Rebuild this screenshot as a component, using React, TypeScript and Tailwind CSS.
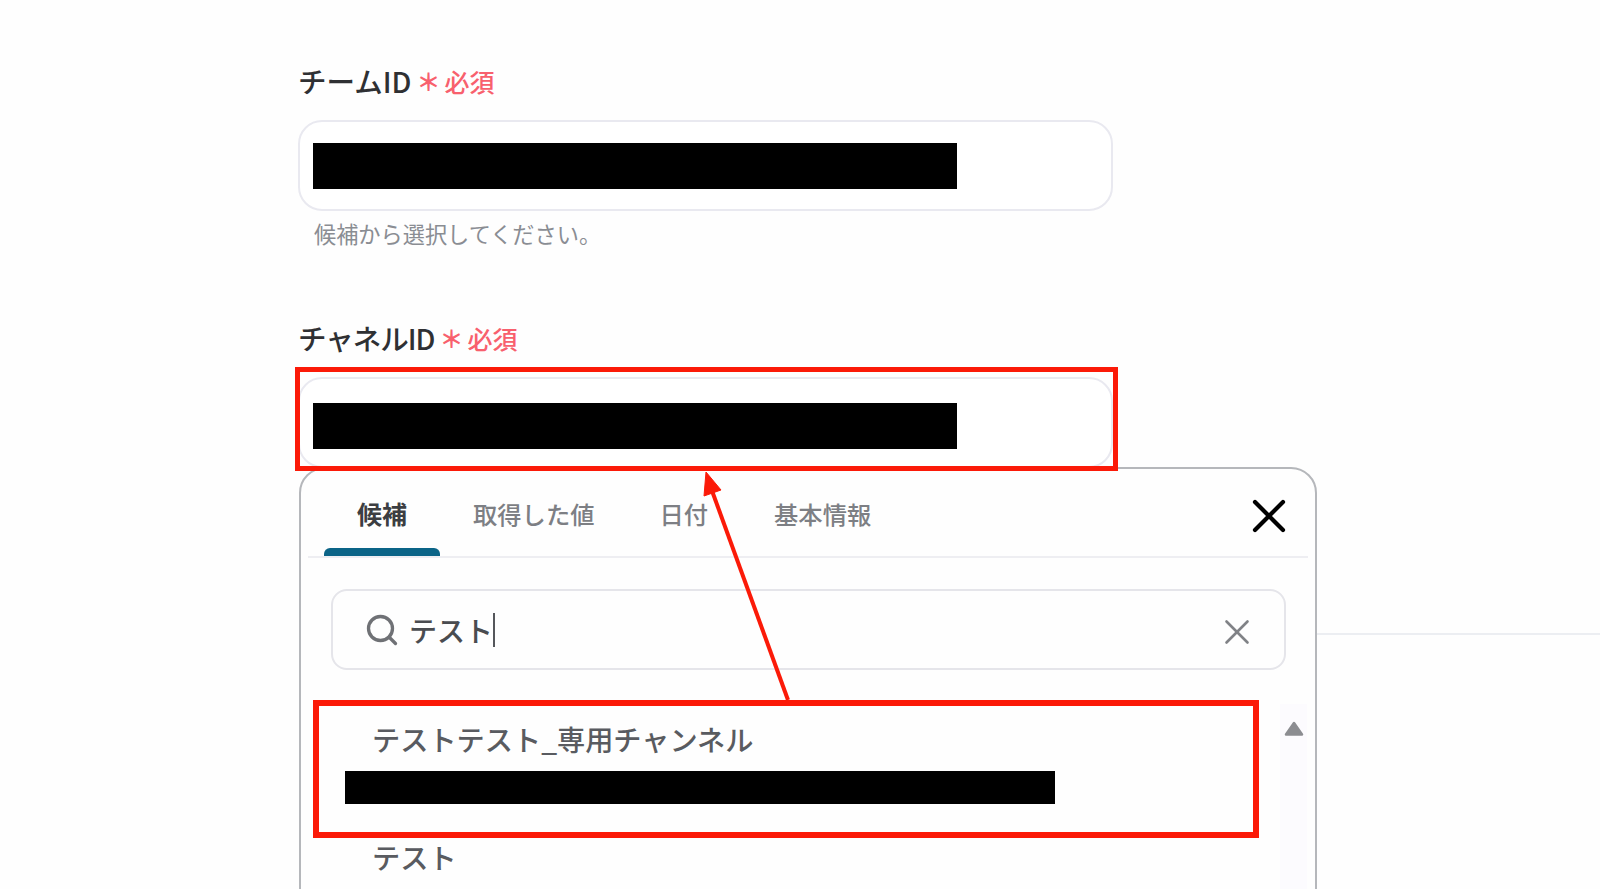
import { Search, X } from "lucide-react";

const font = { fontFamily: '"Noto Sans CJK JP", "Noto Sans", sans-serif' };

function FieldLabel({ text, tight }: { text: string; tight?: boolean }) {
  return (
    <div className="flex h-[34px] items-center font-medium text-[28.5px] leading-[34px] text-[#2f3033]">
      <span className={tight ? "tracking-[-1px]" : ""}>{text}</span>
      <span className="ml-[5px] w-[23px] text-[24px] font-bold leading-[34px] text-[#f8606d]">＊</span>
      <span className="ml-[5px] text-[25px] text-[#f8606d]">必須</span>
    </div>
  );
}

function RedactedInput({ low }: { low?: boolean }) {
  return (
    <div className={low ? "flex h-[91px] w-[815px] items-center rounded-[24px] border-2 border-[#e9e9f0] bg-white pl-[13px] pt-[7px]" : "flex h-[91px] w-[815px] items-center rounded-[24px] border-2 border-[#e9e9f0] bg-white pl-[13px] pt-[1px]"}>
      <div className="h-[46px] w-[644px] bg-black" />
    </div>
  );
}

export default function App() {
  return (
    <div style={font} className="relative h-[889px] w-[1600px] overflow-hidden bg-[#fefefe]">
      <div className="flex flex-col pl-[298px] pt-[64px]">
        <FieldLabel text="チームID" />
        <div className="mt-[22px]">
          <RedactedInput />
        </div>
        <div className="mt-[6px] pl-[16px] text-[22.2px] leading-[32px] text-[#8a8d93]">候補から選択してください。</div>
        <div className="mt-[72px]">
          <FieldLabel text="チャネルID" tight />
        </div>
        <div className="mt-[22px]">
          <RedactedInput low />
        </div>
      </div>

      {/* Background divider to the right of the popup */}
      <div className="absolute left-[1316px] right-0 top-[633px] h-[2px] bg-[#eceef2]" />

      {/* Popup */}
      <div className="absolute left-[299px] top-[467px] h-[440px] w-[1018px] rounded-t-[26px] border-2 border-[#b5b7bb] bg-[#fefefe]">
        <div className="mx-[7px] flex h-[89px] items-end border-b-2 border-[#eeeef2] pl-[16px]">
          <div className="flex h-[87px] w-[116px] flex-col items-center">
            <span className="mt-[26px] text-[25px] font-bold leading-[36px] text-[#3c3e42]">候補</span>
            <div className="mt-auto h-[8px] w-full rounded-t-[6px] bg-[#0b6487]" />
          </div>
          <div className="flex h-[87px] pl-[33px] pt-[27px] text-[24.3px] font-medium leading-[36px] text-[#7d7f84]">
            <span>取得した値</span>
            <span className="ml-[65px]">日付</span>
            <span className="ml-[66px]">基本情報</span>
          </div>
        </div>

        <button className="absolute right-[18px] top-[19px] text-black">
          <X size={56} strokeWidth={1.8} />
        </button>

        <div className="ml-[30px] mt-[31px] flex h-[81px] w-[955px] items-center rounded-[16px] border-2 border-[#e5e5ea] pl-[31px] pr-[26px]">
          <Search size={36} strokeWidth={2.2} className="text-[#6f7175]" />
          <span className="ml-[9px] text-[28px] font-medium leading-[40px] text-[#4a4c50]">テスト</span>
          <span className="h-[34px] w-[2px] bg-[#55575b]" />
          <X size={42} strokeWidth={1.5} className="ml-auto mt-[4px] text-[#808286]" />
        </div>

        <div className="flex">
          <div className="w-[958px] pl-[44px] pt-[50px]">
            <div className="pl-[27px] text-[28.2px] font-medium leading-[38px] text-[#595b60]">テストテスト_専用チャンネル</div>
            <div className="mt-[13px] h-[33px] w-[710px] bg-black" />
            <div className="mt-[34px] pl-[27px] text-[28.2px] font-medium leading-[38px] text-[#595b60]">テスト</div>
          </div>
          <div className="ml-[21px] mt-[34px] flex h-[200px] w-[27px] justify-center bg-[#fcfbfe] pt-[17px]">
            <svg width="20" height="16" viewBox="0 0 20 16">
              <path d="M10 2 L18 13.5 H2 Z" fill="#8c8d91" stroke="#8c8d91" strokeWidth="2.5" strokeLinejoin="round" />
            </svg>
          </div>
        </div>
      </div>

      {/* Annotations */}
      <div className="absolute left-[295px] top-[367px] h-[104px] w-[823px] border-[5px] border-[#fb1a08]" />
      <div className="absolute left-[313px] top-[700px] h-[138px] w-[946px] border-[6px] border-[#fb1a08]" />
      <svg className="absolute left-0 top-0" width="1600" height="889" viewBox="0 0 1600 889" fill="none">
        <path d="M788 700 L711 488" stroke="#fb1a08" strokeWidth="4" />
        <path d="M706 472 L721 490 L704 496 Z" fill="#fb1a08" stroke="#fb1a08" strokeWidth="1" />
      </svg>
    </div>
  );
}
